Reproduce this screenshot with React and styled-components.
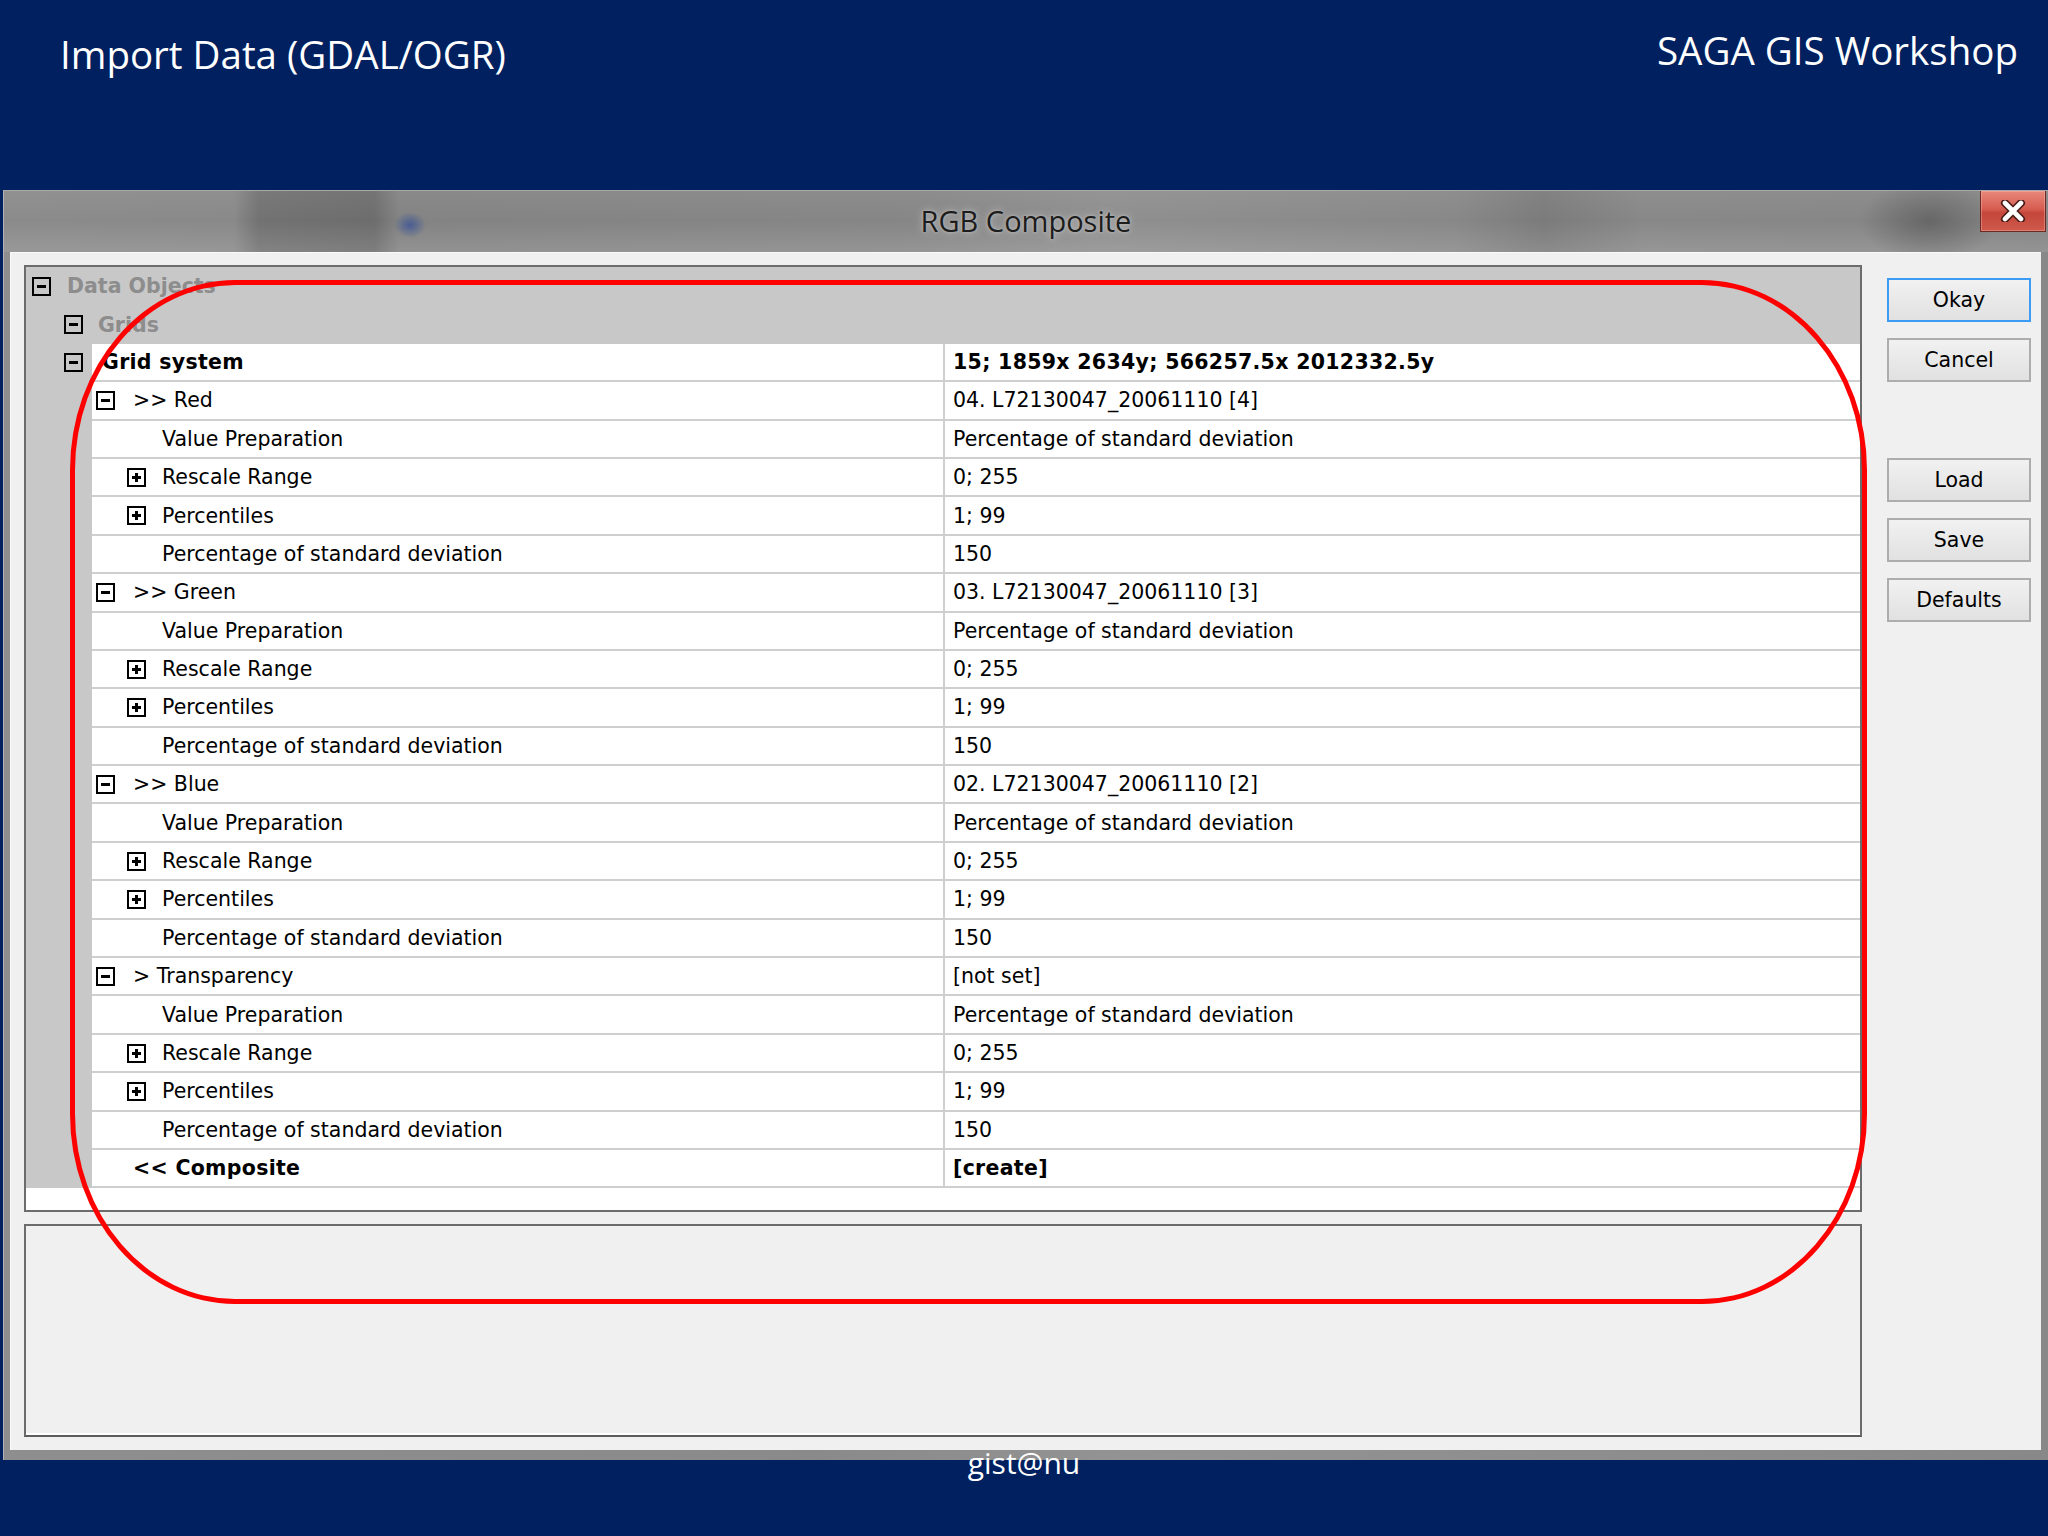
import React from "react";
import styled, { createGlobalStyle } from "styled-components";

const Global = createGlobalStyle`
  html, body { margin: 0; padding: 0; background: #002060; }
  * { box-sizing: border-box; }
`;

const Page = styled.div`
  position: relative;
  width: 2048px;
  height: 1536px;
  overflow: hidden;
  background: #002060;
  display: flex;
  flex-direction: column;
  font-family: "DejaVu Sans", Verdana, sans-serif;
`;

const Header = styled.header`
  height: 190px;
  flex: none;
  display: flex;
  justify-content: space-between;
  align-items: flex-start;
  padding: 0 30px 0 60px;
  font-family: "Open Sans", "Noto Sans", sans-serif;
  color: #ffffff;
  font-size: 38.5px;
`;

const HeaderText = styled.div`
  margin-top: ${(p) => p.$top}px;
  line-height: 1.36;
  white-space: nowrap;
`;

const Window = styled.section`
  flex: none;
  margin-left: 3px;
  width: 2045px;
  height: 1270px;
  display: flex;
  flex-direction: column;
  background: linear-gradient(90deg, #8e8e8e 0%, #8a8a8a 40%, #939393 55%, #888888 100%);
  border-top: 1px solid #a9a9a9;
  border-left: 1px solid #b3b3b3;
  position: relative;
  z-index: 0;
`;

const TitleBar = styled.div`
  height: 61px;
  flex: none;
  display: grid;
  grid-template-columns: 1fr auto 1fr;
  background:
    radial-gradient(ellipse 16px 13px at 406px 34px, rgba(62, 86, 150, 0.85), rgba(62, 86, 150, 0) 100%),
    radial-gradient(ellipse 70px 40px at 1925px 30px, rgba(90, 90, 90, 0.7), rgba(90, 90, 90, 0) 100%),
    linear-gradient(180deg, rgba(255, 255, 255, 0.05) 0%, rgba(255, 255, 255, 0) 50%, rgba(255, 255, 255, 0.12) 100%),
    linear-gradient(90deg, #8b8b8b 0px, #898989 230px, #727272 255px, #6d6d6d 370px, #838383 395px, #868686 900px, #8f8f8f 1100px, #888888 1450px, #7b7b7b 1540px, #888888 1640px, #858585 2045px);
`;

const WindowTitle = styled.div`
  grid-column: 2;
  align-self: center;
  font-family: "Open Sans", "Noto Sans", sans-serif;
  font-size: 29px;
  color: #1c1c1c;
  margin-top: -2px;
  text-shadow: 0 0 8px rgba(220, 220, 220, 0.7), 0 0 3px rgba(220, 220, 220, 0.6);
`;

const CloseButton = styled.button`
  grid-column: 3;
  justify-self: end;
  align-self: start;
  margin-right: 2px;
  width: 66px;
  height: 41px;
  padding: 0;
  display: flex;
  align-items: center;
  justify-content: center;
  border: 1px solid #6b2a24;
  border-top: none;
  background: linear-gradient(180deg, #e8887c 0%, #d65d50 45%, #c4463a 55%, #cf5a4c 100%);
  box-shadow: inset 0 0 0 1px rgba(255, 200, 190, 0.35);
`;

const Body = styled.div`
  flex: 1;
  margin: 0 7px 10px 6px;
  background: #f0f0f0;
  border-top: 1px solid #fbfbfb;
  border-left: 1px solid #fbfbfb;
  padding: 12px 0 13px 13px;
  display: flex;
  gap: 25px;
`;

const MainColumn = styled.div`
  width: 1838px;
  display: flex;
  flex-direction: column;
  gap: 12px;
`;

const PropertyGrid = styled.div`
  height: 947px;
  flex: none;
  border: 2px solid #6c6c6c;
  background: #ffffff;
  display: flex;
  flex-direction: column;
  font-size: 20.5px;
  color: #000;
`;

const CategoryRow = styled.div`
  height: 38.4px;
  flex: none;
  background: #c8c8c8;
  display: flex;
  align-items: center;
  padding-left: ${(p) => p.$pad}px;
  font-weight: 700;
  color: #8d8d8d;
`;

const Row = styled.div`
  height: 38.4px;
  flex: none;
  display: grid;
  grid-template-columns: 66px 851px 1fr;
`;

const Gutter = styled.div`
  background: #c8c8c8;
  display: flex;
  align-items: center;
  padding-left: ${(p) => p.$pad || 0}px;
`;

const Cell = styled.div`
  background: #ffffff;
  border-bottom: 2px solid #cfcfcf;
  display: flex;
  align-items: center;
  padding-left: ${(p) => p.$pad}px;
  font-weight: ${(p) => (p.$bold ? 700 : 400)};
  letter-spacing: ${(p) => (p.$bold ? "0.3px" : "0")};
  white-space: nowrap;
  overflow: hidden;
`;

const ValueCell = styled(Cell)`
  border-left: 2px solid #cfcfcf;
  padding-left: 8px;
`;

const Filler = styled.div`
  flex: 1;
  background: #ffffff;
`;

const Toggle = styled.span`
  position: relative;
  flex: none;
  width: 19px;
  height: 19px;
  border: 2px solid #000;
  margin-right: ${(p) => p.$gap}px;
  &::before {
    content: "";
    position: absolute;
    left: 3px;
    right: 3px;
    top: 6px;
    height: 3px;
    background: #000;
  }
  &::after {
    content: "";
    display: ${(p) => (p.$plus ? "block" : "none")};
    position: absolute;
    top: 3px;
    bottom: 3px;
    left: 6px;
    width: 3px;
    background: #000;
  }
`;

const DescriptionPanel = styled.div`
  flex: 1;
  border: 2px solid #6c6c6c;
  border-bottom-color: #5d5d5d;
  background: #f0f0f0;
  box-shadow: inset 0 -2px 0 #ffffff;
`;

const ButtonColumn = styled.div`
  width: 144px;
  flex: none;
  padding-top: 13px;
  display: flex;
  flex-direction: column;
`;

const DialogButton = styled.button`
  width: 144px;
  height: 44px;
  margin-top: ${(p) => p.$gap}px;
  border: 2px solid ${(p) => (p.$focused ? "#3c9cf5" : "#adadad")};
  background: linear-gradient(180deg, #f1f1f1 0%, #e9e9e9 50%, #e1e1e1 100%);
  font-family: "DejaVu Sans", Verdana, sans-serif;
  font-size: 20.5px;
  color: #000;
  padding: 0;
`;

const Footer = styled.footer`
  position: relative;
  z-index: 1;
  margin-top: -17px;
  text-align: center;
  font-family: "Open Sans", "Noto Sans", sans-serif;
  font-size: 30px;
  line-height: 1.36;
  color: #ffffff;
`;

const Annotation = styled.div`
  position: absolute;
  left: 70px;
  top: 280px;
  width: 1797px;
  height: 1024px;
  border: 5px solid #ff0000;
  border-radius: 165px / 190px;
  pointer-events: none;
  z-index: 2;
`;

const channels = [
  { name: ">> Red", value: "04. L72130047_20061110 [4]" },
  { name: ">> Green", value: "03. L72130047_20061110 [3]" },
  { name: ">> Blue", value: "02. L72130047_20061110 [2]" },
  { name: "> Transparency", value: "[not set]" },
];

const children = [
  { name: "Value Preparation", value: "Percentage of standard deviation" },
  { name: "Rescale Range", value: "0; 255", plus: true },
  { name: "Percentiles", value: "1; 99", plus: true },
  { name: "Percentage of standard deviation", value: "150" },
];

function PropRow({ label, value, pad, toggle, plus, gap, bold, gutterToggle }) {
  return (
    <Row>
      <Gutter $pad={gutterToggle ? 38 : 0}>{gutterToggle && <Toggle $gap={0} />}</Gutter>
      <Cell $pad={pad} $bold={bold}>
        {toggle && <Toggle $plus={plus} $gap={gap} />}
        {label}
      </Cell>
      <ValueCell $bold={bold}>{value}</ValueCell>
    </Row>
  );
}

function CloseGlyph() {
  return (
    <svg width="28" height="22" viewBox="0 0 28 22">
      <path d="M6 3 L22 19 M22 3 L6 19" stroke="#4a1d19" strokeWidth="8" strokeLinecap="round" />
      <path d="M6 3 L22 19 M22 3 L6 19" stroke="#ffffff" strokeWidth="4.6" strokeLinecap="round" />
    </svg>
  );
}

export default function App() {
  return (
    <>
      <Global />
      <Page>
        <Header>
          <HeaderText $top={28}>Import Data (GDAL/OGR)</HeaderText>
          <HeaderText $top={24}>SAGA GIS Workshop</HeaderText>
        </Header>
        <Window>
          <TitleBar>
            <WindowTitle>RGB Composite</WindowTitle>
            <CloseButton aria-label="Close">
              <CloseGlyph />
            </CloseButton>
          </TitleBar>
          <Body>
            <MainColumn>
              <PropertyGrid>
                <CategoryRow $pad={6}>
                  <Toggle $gap={16} />
                  Data Objects
                </CategoryRow>
                <CategoryRow $pad={38}>
                  <Toggle $gap={15} />
                  Grids
                </CategoryRow>
                <PropRow
                  gutterToggle
                  pad={10}
                  bold
                  label="Grid system"
                  value="15; 1859x 2634y; 566257.5x 2012332.5y"
                />
                {channels.map((c) => (
                  <React.Fragment key={c.name}>
                    <PropRow pad={4} toggle gap={18} label={c.name} value={c.value} />
                    {children.map((ch) => (
                      <PropRow
                        key={ch.name}
                        pad={ch.plus ? 35 : 70}
                        toggle={ch.plus}
                        plus
                        gap={16}
                        label={ch.name}
                        value={ch.value}
                      />
                    ))}
                  </React.Fragment>
                ))}
                <PropRow pad={41} bold label="<< Composite" value="[create]" />
                <Filler />
              </PropertyGrid>
              <DescriptionPanel />
            </MainColumn>
            <ButtonColumn>
              <DialogButton $focused $gap={0}>Okay</DialogButton>
              <DialogButton $gap={16}>Cancel</DialogButton>
              <DialogButton $gap={76}>Load</DialogButton>
              <DialogButton $gap={16}>Save</DialogButton>
              <DialogButton $gap={16}>Defaults</DialogButton>
            </ButtonColumn>
          </Body>
        </Window>
        <Footer>gist@nu</Footer>
        <Annotation />
      </Page>
    </>
  );
}
